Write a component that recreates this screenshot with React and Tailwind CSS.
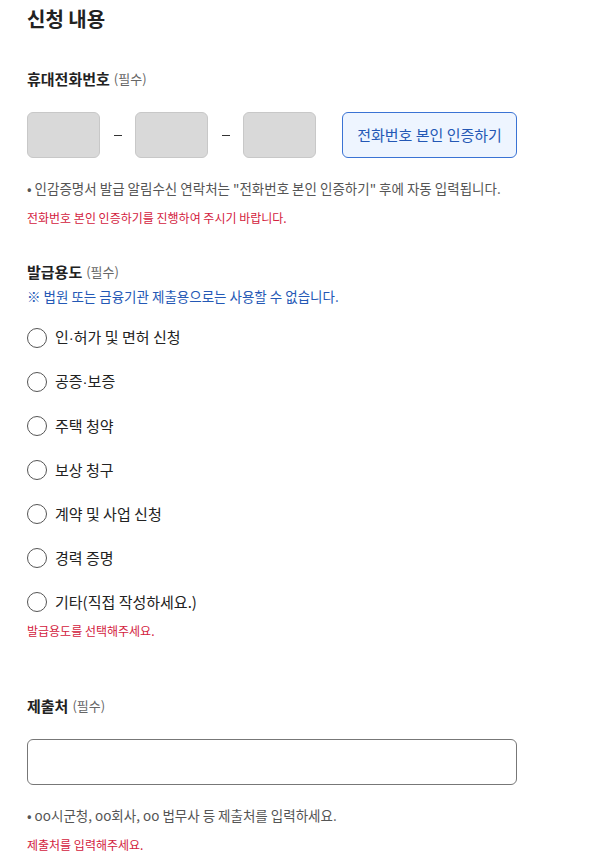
import { useState } from 'react';

const PURPOSES = [
  ['인', '허가 및 면허 신청'],
  ['공증', '보증'],
  ['주택 청약'],
  ['보상 청구'],
  ['계약 및 사업 신청'],
  ['경력 증명'],
  ['기타(직접 작성하세요.)'],
];

const FONT = { fontFamily: '"Noto Sans CJK KR", "Noto Sans", sans-serif' };

function Label({ children }) {
  return (
    <div className="h-[22px] flex items-center gap-1">
      <span className="text-[15px] font-bold text-[#222]">{children}</span>
      <span className="text-[13px] text-[#666]">(필수)</span>
    </div>
  );
}

export default function App() {
  const [purpose, setPurpose] = useState(null);

  return (
    <div className="w-[597px] bg-white px-[27px] pt-[5px] text-[#222]" style={FONT}>
      <h2 className="h-[28px] leading-[28px] text-[20px] font-bold">신청 내용</h2>

      {/* 휴대전화번호 */}
      <div className="mt-[35px]">
        <Label>휴대전화번호</Label>
      </div>
      <div className="mt-[22px] flex items-center h-[46px]">
        <input className="w-[73px] h-[46px] rounded-[6px] border border-[#c8c8c8] bg-[#d9d9d9]" disabled />
        <span className="w-[35px] flex justify-center">
          <span className="block w-[8px] h-px bg-[#333]" />
        </span>
        <input className="w-[73px] h-[46px] rounded-[6px] border border-[#c8c8c8] bg-[#d9d9d9]" disabled />
        <span className="w-[35px] flex justify-center">
          <span className="block w-[8px] h-px bg-[#333]" />
        </span>
        <input className="w-[73px] h-[46px] rounded-[6px] border border-[#c8c8c8] bg-[#d9d9d9]" disabled />
        <button className="ml-[26px] w-[175px] h-[46px] rounded-[6px] border border-[#3a73d4] bg-[#eef5ff] text-[15px] text-[#2458b5]">
          전화번호 본인 인증하기
        </button>
      </div>
      <p className="mt-[20px] h-[20px] leading-[20px] text-[13.5px] text-[#555]">
        • 인감증명서 발급 알림수신 연락처는 "전화번호 본인 인증하기" 후에 자동 입력됩니다.
      </p>
      <p className="mt-[11px] h-[18px] leading-[18px] text-[12px] text-[#d3213d]">
        전화번호 본인 인증하기를 진행하여 주시기 바랍니다.
      </p>

      {/* 발급용도 */}
      <div className="mt-[34px]">
        <Label>발급용도</Label>
      </div>
      <p className="mt-[3px] h-[20px] leading-[20px] text-[13.5px] text-[#2458b5]">
        ※ 법원 또는 금융기관 제출용으로는 사용할 수 없습니다.
      </p>
      <ul className="mt-[10px]">
        {PURPOSES.map((parts) => {
          const key = parts.join('·');
          return (
            <li key={key} className="h-[44px] flex items-center">
              <label className="flex items-center gap-[8px] cursor-pointer" onClick={() => setPurpose(key)}>
                <span className="w-[20px] h-[20px] rounded-full border border-[#555] bg-white flex items-center justify-center">
                  {purpose === key && <span className="w-[10px] h-[10px] rounded-full bg-[#2458b5]" />}
                </span>
                <span className="text-[15px] text-[#222]">
                  {parts[0]}
                  {parts[1] && (
                    <>
                      <span style={{ fontFamily: '"Liberation Sans", sans-serif' }}>·</span>
                      {parts[1]}
                    </>
                  )}
                </span>
              </label>
            </li>
          );
        })}
      </ul>
      <p className="-mt-[1px] h-[16px] leading-[16px] text-[12px] text-[#d3213d]">발급용도를 선택해주세요.</p>

      {/* 제출처 */}
      <div className="mt-[56px]">
        <Label>제출처</Label>
      </div>
      <input className="mt-[22px] block w-[490px] h-[46px] rounded-[6px] border border-[#777] bg-white px-3" />
      <p className="mt-[20px] h-[20px] leading-[20px] text-[13.5px] text-[#555]">
        • oo시군청, oo회사, oo 법무사 등 제출처를 입력하세요.
      </p>
      <p className="mt-[11px] h-[18px] leading-[18px] text-[12px] text-[#d3213d]">제출처를 입력해주세요.</p>
    </div>
  );
}
